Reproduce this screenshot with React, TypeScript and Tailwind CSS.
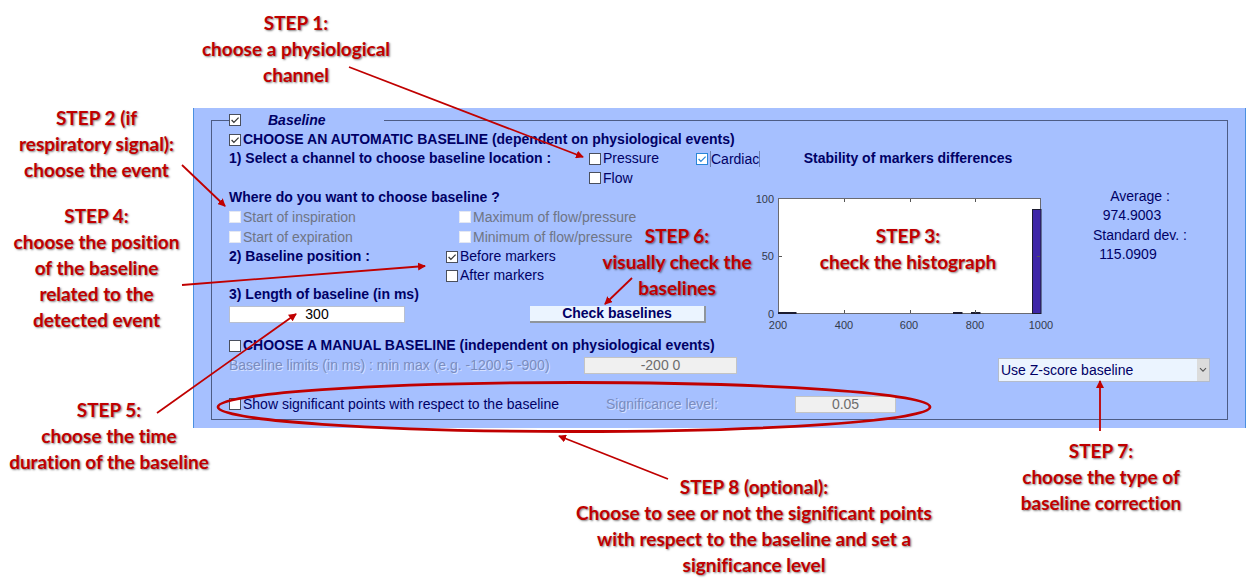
import React, { useState } from "react";

type StepProps = { className?: string; lines: string[] };

function Step({ className = "", lines }: StepProps) {
  return (
    <p
      className={`text-center font-[Lato,'Open_Sans',sans-serif] text-[19px] leading-[26px] font-bold whitespace-nowrap text-[#c00000] [font-variant-ligatures:none] [text-shadow:1px_1px_2px_rgba(0,0,0,0.5)] ${className}`}
    >
      {lines.map((line) => (
        <span key={line} className="block">
          {line}
        </span>
      ))}
    </p>
  );
}

type TickProps = {
  label: string;
  className?: string;
  labelClassName?: string;
  checked?: boolean;
  disabled?: boolean;
  focused?: boolean;
};

function Tick({ label, className = "", labelClassName = "", checked = false, disabled = false, focused = false }: TickProps) {
  const [on, setOn] = useState(checked);
  const frame = disabled ? "border-[#e4e8f2]" : focused ? "border-[#2a86d8]" : "border-[#4a4f5c]";
  return (
    <label className={`flex shrink-0 items-center gap-0.5 whitespace-nowrap ${disabled ? "text-[#6f7585]" : ""} ${className}`}>
      <span className="relative flex">
        <input
          type="checkbox"
          checked={on}
          disabled={disabled}
          onChange={() => setOn(!on)}
          className={`size-3 appearance-none border bg-white ${frame}`}
        />
        {on && (
          <svg viewBox="0 0 12 12" className={`pointer-events-none absolute inset-0 size-3 ${focused ? "text-[#2a86d8]" : "text-[#333]"}`}>
            <path d="M2.6 6 4.9 8.4 9.6 3.6" fill="none" stroke="currentColor" strokeWidth="1.2" />
          </svg>
        )}
      </span>
      <span className={labelClassName}>{label}</span>
    </label>
  );
}

const bars = [
  { x: 19, width: 18, height: 1 },
  { x: 194, width: 9, height: 1 },
  { x: 212, width: 9, height: 1 },
  { x: 273, width: 9, height: 104 },
];

function Histogram() {
  return (
    <svg width="298" height="147" className="block overflow-visible font-[Liberation_Sans,Arial,sans-serif] text-[11px]" role="img" aria-label="Stability of markers differences">
      <rect x="19.5" y="11.5" width="262" height="115" fill="#fff" stroke="#6a6a70" />
      {bars.map((b) => (
        <rect key={b.x} x={b.x + 0.5} y={126.5 - b.height} width={b.width - 0.5} height={b.height} fill="#3e26a8" stroke="#1c1c30" />
      ))}
      <path d="M85.5 12v3M151.5 12v3M216.5 12v3M85.5 126v-3M151.5 126v-3M216.5 126v-3M20 69.5h3M281 69.5h-3" stroke="#555" />
      <g fill="#333a4c" textAnchor="end">
        <text x="15" y="16">100</text>
        <text x="15" y="73">50</text>
        <text x="15" y="131">0</text>
      </g>
      <g fill="#333a4c" textAnchor="middle">
        <text x="19" y="142">200</text>
        <text x="85" y="142">400</text>
        <text x="150" y="142">600</text>
        <text x="216" y="142">800</text>
        <text x="282" y="142">1000</text>
      </g>
    </svg>
  );
}

const arrows = [
  [349, 67, 583, 157],
  [182, 165, 225, 206],
  [182, 285, 425, 266],
  [157, 413, 296, 314],
  [632, 278, 605, 304],
  [1100, 431, 1100, 381],
  [668, 479, 559, 436],
];

function Pointers() {
  return (
    <svg width="1255" height="586" className="pointer-events-none absolute top-0 left-0" aria-hidden="true">
      <defs>
        <marker id="head" markerUnits="userSpaceOnUse" markerWidth="8" markerHeight="8" refX="7" refY="4" orient="auto">
          <path d="M0 0 8 4 0 8Z" fill="#c00000" />
        </marker>
      </defs>
      {arrows.map(([x1, y1, x2, y2]) => (
        <line key={`${x1}-${y1}`} x1={x1} y1={y1} x2={x2} y2={y2} stroke="#c00000" strokeWidth="1.8" markerEnd="url(#head)" />
      ))}
      <ellipse cx="574" cy="407" rx="356" ry="24.5" fill="none" stroke="#c00000" strokeWidth="2.8" />
    </svg>
  );
}

export default function App() {
  return (
    <div className="relative flex bg-white">
      <aside className="flex w-[193px] shrink-0 flex-col pt-[105px]">
        <Step lines={["STEP 2 (if", "respiratory signal):", "choose the event"]} />
        <Step className="mt-5" lines={["STEP 4:", "choose the position", "of the baseline", "related to the", "detected event"]} />
        <Step className="mt-16 w-[218px]" lines={["STEP 5:", "choose the time", "duration of the baseline"]} />
      </aside>

      <main className="min-w-0 flex-1 pr-[9px]">
        <header className="h-[108px] pt-[10px]">
          <Step className="w-[206px]" lines={["STEP 1:", "choose a physiological", "channel"]} />
        </header>

        <section className="border-x border-[#4a90e0] bg-[#a6c0ff] px-[17px] pt-0.5 pb-2 font-[Liberation_Sans,Arial,sans-serif] text-[14px] leading-[19px] text-[#000066]">
          <fieldset className="min-w-0 border border-[#4d5c85] pb-[5px] pl-[17px]">
            <legend className="flex h-5 w-[155px] items-center">
              <Tick checked label="Baseline" labelClassName="pl-[25px] font-bold italic" />
            </legend>

            <div className="flex">
              <div className="relative w-[530px] shrink-0">
                <Tick checked className="h-[19px] font-bold" label="CHOOSE AN AUTOMATIC BASELINE (dependent on physiological events)" />
                <div className="flex h-[19px] items-center">
                  <h2 className="w-[360px] shrink-0 font-bold">1) Select a channel to choose baseline location :</h2>
                  <Tick className="w-[107px]" label="Pressure" />
                  <Tick checked focused label="Cardiac" labelClassName="border-x border-[#6f7fae] leading-4" />
                </div>
                <div className="flex h-5 items-center pl-[360px]">
                  <Tick label="Flow" />
                </div>

                <h2 className="font-bold">Where do you want to choose baseline ?</h2>
                <div className="flex h-5 items-center">
                  <Tick disabled className="w-[230px]" label="Start of inspiration" />
                  <Tick disabled label="Maximum of flow/pressure" />
                </div>
                <div className="flex h-5 items-center">
                  <Tick disabled className="w-[230px]" label="Start of expiration" />
                  <Tick disabled label="Minimum of flow/pressure" />
                </div>

                <div className="flex h-[19px] items-center">
                  <h2 className="w-[217px] font-bold">2) Baseline position :</h2>
                  <Tick checked label="Before markers" />
                </div>
                <div className="flex h-[19px] items-center pl-[217px]">
                  <Tick label="After markers" />
                </div>

                <label htmlFor="length" className="block font-bold">
                  3) Length of baseline (in ms)
                </label>
                <div className="flex h-5 items-center gap-[125px]">
                  <input id="length" defaultValue="300" className="h-[17px] w-[176px] border border-[#b9c0d0] bg-white text-center text-black" />
                  <button type="button" className="h-[17px] w-[176px] border-r-2 border-b-2 border-[#8f959c] bg-[#ebf4ff] leading-[15px] font-bold">
                    Check baselines
                  </button>
                </div>

                <Tick className="mt-3 h-[19px] font-bold" label="CHOOSE A MANUAL BASELINE (independent on physiological events)" />
                <div className="flex h-5 items-center">
                  <label htmlFor="limits" className="w-[355px] text-[#7a8cc0] [text-shadow:1px_1px_0_#d5e0ff]">
                    Baseline limits (in ms) : min max (e.g. -1200.5 -900)
                  </label>
                  <input id="limits" disabled defaultValue="-200 0" className="h-[17px] w-[153px] border border-[#c4c4c4] bg-[#f0f0f0] text-center text-[#6d6d6d]" />
                </div>

                <Step className="absolute top-[93px] left-[368px] w-40" lines={["STEP 6:", "visually check the", "baselines"]} />
              </div>

              <div className="flex flex-1 flex-col pt-[19px]">
                <h2 className="w-[298px] text-center font-bold">Stability of markers differences</h2>
                <div className="mt-[19px] flex">
                  <figure className="relative w-[298px] shrink-0">
                    <Histogram />
                    <Step className="absolute inset-x-0 top-9" lines={["STEP 3:", "check the histograph"]} />
                  </figure>
                  <dl className="flex-1 pr-1 text-center">
                    <dt>Average :</dt>
                    <dd className="h-5 pr-4">974.9003</dd>
                    <dt>Standard dev. :</dt>
                    <dd className="h-5 pr-6">115.0909</dd>
                  </dl>
                </div>
                <div className="relative mt-6 mr-[17px] w-[212px] self-end">
                  <select aria-label="Baseline correction" className="block h-6 w-full appearance-none border border-[#b4bccb] bg-[#ebf4ff] pl-0.5">
                    <option>Use Z-score baseline</option>
                  </select>
                  <span className="pointer-events-none absolute inset-y-px right-px flex w-3 items-center justify-center bg-[#dcdcdc] text-[#555]">
                    <svg width="8" height="6" viewBox="0 0 8 6">
                      <path d="M1 1.2 4 4.2 7 1.2" fill="none" stroke="currentColor" strokeWidth="1.1" />
                    </svg>
                  </span>
                </div>
              </div>
            </div>

            <div className="mt-3 flex h-5 items-center">
              <Tick className="w-[377px]" label="Show significant points with respect to the baseline" />
              <label htmlFor="level" className="w-[189px] text-[#7a8cc0] [text-shadow:1px_1px_0_#d5e0ff]">
                Significance level:
              </label>
              <input id="level" disabled defaultValue="0.05" className="h-[17px] w-[101px] border border-[#c4c4c4] bg-[#f0f0f0] text-center text-[#6d6d6d]" />
            </div>
          </fieldset>
        </section>

        <footer className="flex gap-[67px] pt-[10px] pl-[371px]">
          <Step
            className="w-[380px] pt-9"
            lines={["STEP 8 (optional):", "Choose to see or not the significant points", "with respect to the baseline and set a", "significance level"]}
          />
          <Step className="w-[180px]" lines={["STEP 7:", "choose the type of", "baseline correction"]} />
        </footer>
      </main>
      <Pointers />
    </div>
  );
}
